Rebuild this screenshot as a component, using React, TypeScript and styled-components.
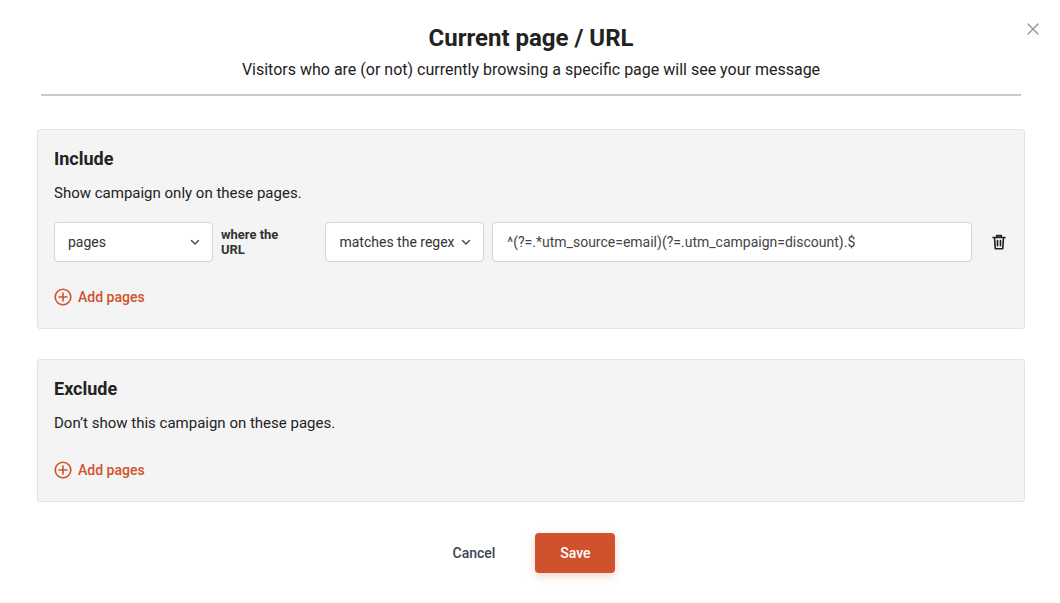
import React from "react";
import styled, { createGlobalStyle } from "styled-components";

const Global = createGlobalStyle`
  body { margin: 0; background: #fff; font-family: Roboto, "Liberation Sans", sans-serif; color: #222; }
`;

const Page = styled.div`
  position: relative;
  width: 1060px;
  height: 603px;
  box-sizing: border-box;
  padding: 22px 35px 0 37px;
`;
const Close = styled.button`
  position: absolute; top: 22px; right: 20px;
  border: 0; background: none; padding: 0; cursor: pointer; color: #9a9a9a;
`;
const Header = styled.div`
  margin: 0 4px;
  text-align: center;
  border-bottom: 2px solid #c9c9c9;
  padding-bottom: 14px;
`;
const Title = styled.h1`
  margin: 0; font-size: 24px; font-weight: 700; line-height: 32px; color: #222;
`;
const Subtitle = styled.p`
  margin: 6px 0 0; font-size: 16px; line-height: 20px; color: #222;
`;
const Card = styled.section<{ $mt: number }>`
  margin-top: ${p => p.$mt}px;
  background: #f4f4f4;
  border: 1px solid #e2e2e2;
  border-radius: 3px;
  padding: 18px 16px 22px 16px;
`;
const CardTitle = styled.h2`
  margin: 0; font-size: 18px; font-weight: 700; line-height: 22px; color: #222;
`;
const Desc = styled.p`
  margin: 13px 0 0; font-size: 15px; line-height: 20px; color: #222;
`;
const Row = styled.div`
  display: flex; align-items: center; gap: 8px; margin-top: 19px;
`;
const Select = styled.div<{ $w: number }>`
  width: ${p => p.$w}px; height: 40px; box-sizing: border-box;
  background: #fff; border: 1px solid #d3d3d8; border-radius: 4px;
  display: flex; align-items: center; justify-content: space-between;
  padding: 0 11px 0 13px; font-size: 14px; color: #333;
`;
const Label = styled.span`
  font-size: 13px; font-weight: 700; color: #333; margin-right: 12px;
`;
const Input = styled.div`
  width: 480px; height: 40px; box-sizing: border-box;
  background: #fff; border: 1px solid #d3d3d8; border-radius: 4px;
  display: flex; align-items: center; padding: 0 14px;
  font-size: 14px; color: #444;
`;
const Trash = styled.span`
  margin-left: 10px; display: flex; color: #222;
`;
const Add = styled.button<{ $mt: number }>`
  margin-top: ${p => p.$mt}px;
  display: flex; align-items: center; gap: 6px;
  border: 0; background: none; padding: 0;
  color: #d0522c; font-family: inherit; font-size: 14px; font-weight: 500;
`;
const Footer = styled.div`
  display: flex; justify-content: center; align-items: center; gap: 34px; margin-top: 31px;
`;
const Cancel = styled.button`
  border: 0; background: none; font-family: inherit; font-size: 14px; font-weight: 500; color: #3d4350;
`;
const Save = styled.button`
  width: 80px; height: 40px; border: 0; border-radius: 4px;
  background: #cf522c; color: #fff; font-family: inherit; font-size: 14px; font-weight: 500;
  box-shadow: 0 3px 8px rgba(207,82,44,0.25);
`;

const Chevron = () => (
  <svg width="12" height="12" viewBox="0 0 12 12" fill="none" stroke="#444" strokeWidth="1.4" strokeLinecap="round" strokeLinejoin="round">
    <path d="M2.5 4.5 6 8l3.5-3.5" />
  </svg>
);
const Plus = () => (
  <svg width="18" height="18" viewBox="0 0 18 18" fill="none" stroke="#d0522c" strokeWidth="1.6" strokeLinecap="round">
    <circle cx="9" cy="9" r="7.8" />
    <path d="M9 5v8M5 9h8" />
  </svg>
);

export default function App() {
  return (
    <Page>
      <Global />
      <Close aria-label="close">
        <svg width="14" height="14" viewBox="0 0 14 14" stroke="currentColor" strokeWidth="1.5" strokeLinecap="round">
          <path d="M2 2l10 10M12 2 2 12" />
        </svg>
      </Close>
      <Header>
        <Title>Current page / URL</Title>
        <Subtitle>Visitors who are (or not) currently browsing a specific page will see your message</Subtitle>
      </Header>
      <Card $mt={33}>
        <CardTitle>Include</CardTitle>
        <Desc>Show campaign only on these pages.</Desc>
        <Row>
          <Select $w={159}>pages<Chevron /></Select>
          <Label>where the URL</Label>
          <Select $w={159}>matches the regex<Chevron /></Select>
          <Input>^(?=.*utm_source=email)(?=.utm_campaign=discount).$</Input>
          <Trash>
            <svg width="18" height="18" viewBox="0 0 24 24" fill="none" stroke="currentColor" strokeWidth="2.2" strokeLinecap="round" strokeLinejoin="round">
              <path d="M4 6h16M9 6V3.5h6V6M6 6l1 15h10l1-15M10 10v7M14 10v7" />
            </svg>
          </Trash>
        </Row>
        <Add $mt={26}><Plus />Add pages</Add>
      </Card>
      <Card $mt={30}>
        <CardTitle>Exclude</CardTitle>
        <Desc>Don’t show this campaign on these pages.</Desc>
        <Add $mt={28}><Plus />Add pages</Add>
      </Card>
      <Footer>
        <Cancel>Cancel</Cancel>
        <Save>Save</Save>
      </Footer>
    </Page>
  );
}
